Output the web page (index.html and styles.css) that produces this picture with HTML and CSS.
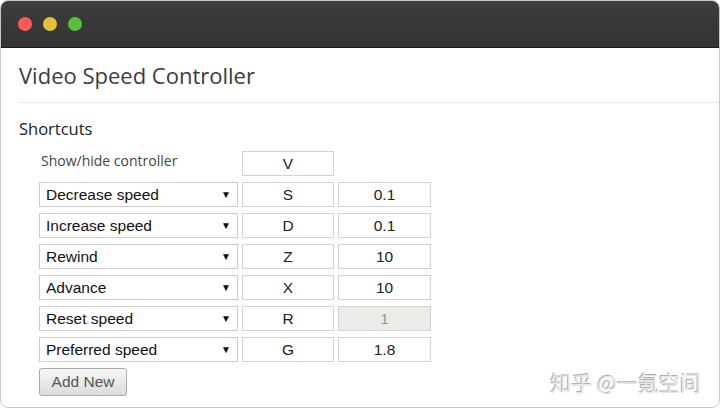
FILE: index.html
```html
<!DOCTYPE html>
<html lang="en">
<head>
    <meta charset="UTF-8">
    <title>Video Speed Controller</title>
    <link rel="stylesheet" href="styles.css">
</head>
<body>
    <div class="window">
        <div class="titlebar">
            <span class="light red"></span>
            <span class="light yellow"></span>
            <span class="light green"></span>
        </div>
        <div class="content">
            <h1>Video Speed Controller</h1>
            <h2>Shortcuts</h2>
            <div class="shortcuts">
                <div class="row">
                    <div class="label">Show/hide controller</div>
                    <input class="key" type="text" value="V">
                </div>
                <div class="row">
                    <div class="select">Decrease speed<span class="arrow">&#9660;</span></div>
                    <input class="key" type="text" value="S">
                    <input class="value" type="text" value="0.1">
                </div>
                <div class="row">
                    <div class="select">Increase speed<span class="arrow">&#9660;</span></div>
                    <input class="key" type="text" value="D">
                    <input class="value" type="text" value="0.1">
                </div>
                <div class="row">
                    <div class="select">Rewind<span class="arrow">&#9660;</span></div>
                    <input class="key" type="text" value="Z">
                    <input class="value" type="text" value="10">
                </div>
                <div class="row">
                    <div class="select">Advance<span class="arrow">&#9660;</span></div>
                    <input class="key" type="text" value="X">
                    <input class="value" type="text" value="10">
                </div>
                <div class="row">
                    <div class="select">Reset speed<span class="arrow">&#9660;</span></div>
                    <input class="key" type="text" value="R">
                    <input class="value" type="text" value="1" disabled>
                </div>
                <div class="row">
                    <div class="select">Preferred speed<span class="arrow">&#9660;</span></div>
                    <input class="key" type="text" value="G">
                    <input class="value" type="text" value="1.8">
                </div>
            </div>
            <div class="footer">
                <button type="button" class="add-btn">Add New</button>
                <span class="watermark">知乎 @一氪空间</span>
            </div>
        </div>
    </div>
</body>
</html>
```

FILE: styles.css
```css
body {
    margin: 0;
    padding: 0;
    background-color: #fff;
    font-family: "Open Sans", sans-serif;
}
.window {
    width: 718px;
    height: 406px;
    border: 1px solid #c8c8c8;
    border-radius: 8px;
    overflow: hidden;
    background-color: #fff;
}
.titlebar {
    height: 46px;
    background: linear-gradient(#3d3d3d, #333);
    border-bottom: 1px solid #1e1e1e;
    display: flex;
    align-items: center;
    gap: 11px;
    padding-left: 17px;
}
.light {
    width: 14px;
    height: 14px;
    border-radius: 50%;
}
.red { background-color: #fc5b57; }
.yellow { background-color: #e5bf3c; }
.green { background-color: #57c038; }
.content {
    padding-left: 18px;
}
h1 {
    margin: 0;
    padding: 13px 0 12px;
    font-size: 22px;
    font-weight: normal;
    color: #3c3c3c;
    border-bottom: 1px solid #e8e8e8;
    line-height: 29px;
}
h2 {
    margin: 0;
    padding-top: 15px;
    font-size: 16.5px;
    font-weight: normal;
    color: #222;
    line-height: 22px;
}
.shortcuts {
    padding-left: 20px;
    margin-top: 11px;
    display: flex;
    flex-direction: column;
    gap: 6px;
}
.row {
    display: flex;
    align-items: center;
    gap: 4px;
    height: 25px;
}
.label {
    width: 197px;
    font-size: 14px;
    color: #444;
    padding-left: 2px;
    margin-top: -6px;
}
.select {
    width: 191px;
    height: 23px;
    border: 1px solid #ccc;
    padding-left: 6px;
    display: flex;
    align-items: center;
    justify-content: space-between;
    font-family: "Liberation Sans", Arial, sans-serif;
    font-size: 15.5px;
    color: #111;
}
.arrow {
    font-size: 10px;
    padding-right: 6px;
}
input {
    box-sizing: border-box;
    height: 25px;
    border: 1px solid #d3d3d3;
    text-align: center;
    font-family: "Liberation Sans", Arial, sans-serif;
    font-size: 15.5px;
    color: #222;
    padding: 0;
    background-color: #fff;
}
.key {
    width: 92px;
}
.value {
    width: 93px;
}
.value:disabled {
    background-color: #ebebe8;
    color: #999;
}
.footer {
    display: flex;
    align-items: flex-start;
    justify-content: space-between;
    margin-top: 6px;
    padding-left: 20px;
    padding-right: 18px;
}
.add-btn {
    width: 88px;
    height: 28px;
    border: 1px solid #aaa;
    border-radius: 3px;
    background: linear-gradient(#f6f6f6, #dcdcdc);
    font-family: "Liberation Sans", Arial, sans-serif;
    font-size: 15.5px;
    color: #555;
}
.watermark {
    font-family: "Noto Sans CJK SC", sans-serif;
    font-size: 21px;
    line-height: 26px;
    color: #e6e6e6;
    text-shadow: -1px -1px 0 #b0b0b0;
    margin-top: 1px;
}
```
